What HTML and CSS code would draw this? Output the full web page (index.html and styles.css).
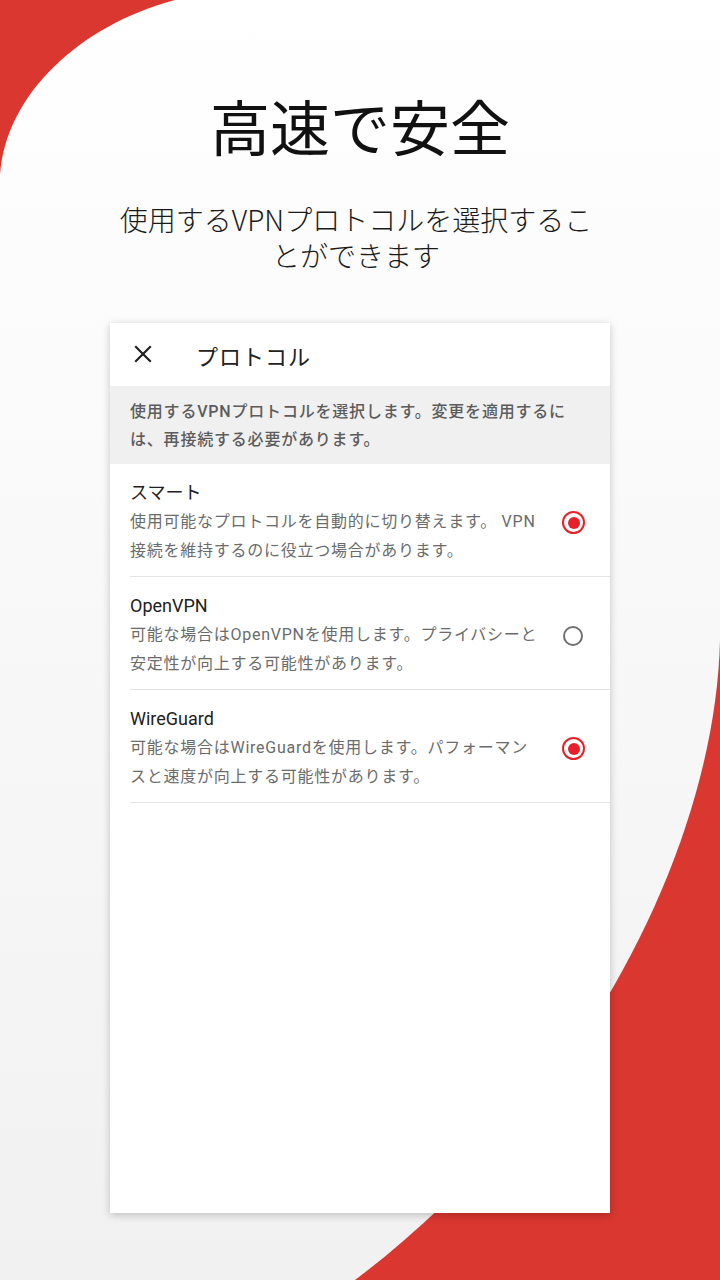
FILE: index.html
```html
<!DOCTYPE html>
<html lang="ja">
<head>
  <meta charset="UTF-8">
  <title>プロトコル</title>
  <link rel="stylesheet" href="styles.css">
</head>
<body>
  <svg class="backdrop" width="720" height="1280" viewBox="0 0 720 1280">
    <defs>
      <linearGradient id="paper" x1="0" y1="0" x2="0" y2="1">
        <stop offset="0" stop-color="#ffffff"/>
        <stop offset="1" stop-color="#f1f1f1"/>
      </linearGradient>
    </defs>
    <rect width="720" height="1280" fill="#d9372f"/>
    <path d="M175 0 H720 V640 C715 850 580 1110 355 1280 H0 V175 C5 95 80 25 175 0 Z" fill="url(#paper)"/>
  </svg>

  <div class="page">
    <h1 class="headline">高速で安全</h1>
    <p class="lead">使用するVPNプロトコルを選択するこ<br>とができます</p>

    <div class="card">
      <div class="card-header">
        <svg class="close" width="20" height="20" viewBox="0 0 20 20">
          <path d="M3 3 L17 17 M17 3 L3 17" stroke="#222" stroke-width="2.2" stroke-linecap="square"/>
        </svg>
        <span class="card-title">プロトコル</span>
      </div>

      <div class="notice">使用するVPNプロトコルを選択します。変更を適用するに<br>は、再接続する必要があります。</div>

      <div class="option">
        <div class="option-text">
          <div class="option-name">スマート</div>
          <div class="option-desc">使用可能なプロトコルを自動的に切り替えます。 VPN<br>接続を維持するのに役立つ場合があります。</div>
        </div>
        <span class="radio checked"></span>
      </div>

      <div class="option">
        <div class="option-text">
          <div class="option-name">OpenVPN</div>
          <div class="option-desc">可能な場合はOpenVPNを使用します。プライバシーと<br>安定性が向上する可能性があります。</div>
        </div>
        <span class="radio"></span>
      </div>

      <div class="option">
        <div class="option-text">
          <div class="option-name">WireGuard</div>
          <div class="option-desc">可能な場合はWireGuardを使用します。パフォーマン<br>スと速度が向上する可能性があります。</div>
        </div>
        <span class="radio checked"></span>
      </div>
    </div>
  </div>
</body>
</html>
```

FILE: styles.css
```css
  body {
    margin: 0;
    width: 720px;
    height: 1280px;
    overflow: hidden;
    position: relative;
    font-family: Roboto, "Noto Sans CJK JP", sans-serif;
    color: #212121;
  }

  .backdrop {
    position: absolute;
    left: 0;
    top: 0;
    z-index: 0;
  }

  .page {
    position: relative;
    z-index: 1;
    display: flex;
    flex-direction: column;
    align-items: center;
    padding-top: 89px;
  }

  .headline {
    font-family: "Noto Sans CJK JP", sans-serif;
    font-weight: 400;
    font-size: 60px;
    line-height: 72px;
    margin: 0;
    color: #111;
  }

  .lead {
    font-family: "Noto Sans CJK JP", sans-serif;
    font-weight: 300;
    font-size: 28px;
    line-height: 36px;
    margin: 40px 0 0 -8px;
    text-align: center;
    color: #1a1a1a;
    white-space: nowrap;
  }

  .card {
    width: 500px;
    height: 890px;
    margin-top: 50px;
    background: #fff;
    box-shadow: 0 2px 8px rgba(0, 0, 0, 0.22);
  }

  .card-header {
    height: 63px;
    display: flex;
    align-items: center;
    padding-left: 23px;
  }

  .close {
    margin-top: -2px;
  }

  .card-title {
    font-family: "Noto Sans CJK JP", sans-serif;
    font-weight: 400;
    font-size: 22px;
    letter-spacing: 1px;
    margin-left: 43px;
    color: #212121;
  }

  .notice {
    background: #f0f0f0;
    padding: 12px 20px 10px;
    font-size: 16px;
    font-weight: 500;
    line-height: 28px;
    letter-spacing: 0.8px;
    color: #5c5c5c;
    white-space: nowrap;
  }

  .option {
    display: flex;
    align-items: center;
    margin-left: 20px;
    padding: 16px 25px 11px 0;
    border-bottom: 1px solid #e4e4e4;
  }

  .option-text {
    flex: 1;
    white-space: nowrap;
  }

  .option-name {
    font-size: 18px;
    line-height: 26px;
    color: #212121;
  }

  .option-desc {
    margin-top: 1px;
    font-size: 16px;
    line-height: 29px;
    letter-spacing: 0.75px;
    color: #6b6b6b;
  }

  .radio {
    width: 16px;
    height: 16px;
    border: 2px solid #707070;
    border-radius: 50%;
    margin-right: 2px;
    position: relative;
  }

  .radio.checked {
    width: 19px;
    height: 19px;
    border: 2.5px solid #e8202a;
    margin-right: 0;
  }

  .radio.checked::after {
    content: "";
    position: absolute;
    left: 50%;
    top: 50%;
    width: 12px;
    height: 12px;
    margin: -6px 0 0 -6px;
    border-radius: 50%;
    background: #e8202a;
  }
```
